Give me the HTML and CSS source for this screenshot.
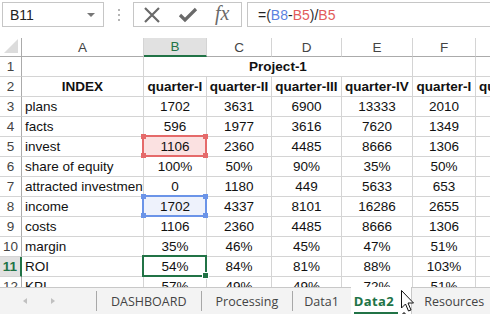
FILE: index.html
```html
<!DOCTYPE html>
<html lang="en">
<head>
    <meta charset="UTF-8">
    <title>Project-1</title>
    <link rel="stylesheet" href="styles.css">
</head>
<body>
    <div class="formula-bar">
        <div class="name-box">
            <span>B11</span>
            <span class="drop"></span>
        </div>
        <div class="dots"><i></i><i></i><i></i></div>
        <div class="buttons">
            <svg width="18" height="18" viewBox="0 0 18 18"><path d="M2 2 L16 16 M16 2 L2 16" stroke="#6a6a6a" stroke-width="2.2" fill="none"/></svg>
            <svg width="20" height="18" viewBox="0 0 20 18"><path d="M2 9 L7 14 L18 3" stroke="#6a6a6a" stroke-width="3.2" fill="none"/></svg>
            <span class="fx">fx</span>
        </div>
        <div class="formula">=<span class="paren">(</span><span class="ref-blue">B8</span>-<span class="ref-red">B5</span><span class="paren">)</span>/<span class="ref-red">B5</span></div>
    </div>

    <div class="sheet">
        <div class="grid">
            <div class="corner"><span class="tri"></span></div>
            <div class="colhead">A</div>
            <div class="colhead active">B</div>
            <div class="colhead">C</div>
            <div class="colhead">D</div>
            <div class="colhead">E</div>
            <div class="colhead">F</div>
            <div class="colhead">G</div>

            <div class="rowhead">1</div>
            <div class="c"></div>
            <div class="c bold merged">Project-1</div>
            <div class="c"></div>
            <div class="c"></div>

            <div class="rowhead">2</div>
            <div class="c bold mid">INDEX</div>
            <div class="c bold mid">quarter-I</div>
            <div class="c bold mid">quarter-II</div>
            <div class="c bold mid">quarter-III</div>
            <div class="c bold mid">quarter-IV</div>
            <div class="c bold mid">quarter-I</div>
            <div class="c bold">qu</div>

            <div class="rowhead">3</div>
            <div class="c">plans</div>
            <div class="c mid">1702</div><div class="c mid">3631</div><div class="c mid">6900</div><div class="c mid">13333</div><div class="c mid">2010</div><div class="c"></div>

            <div class="rowhead">4</div>
            <div class="c">facts</div>
            <div class="c mid">596</div><div class="c mid">1977</div><div class="c mid">3616</div><div class="c mid">7620</div><div class="c mid">1349</div><div class="c"></div>

            <div class="rowhead">5</div>
            <div class="c">invest</div>
            <div class="c mid sel sel-red">1106<i class="k tl"></i><i class="k tr"></i><i class="k bl"></i><i class="k br"></i></div>
            <div class="c mid">2360</div><div class="c mid">4485</div><div class="c mid">8666</div><div class="c mid">1306</div><div class="c"></div>

            <div class="rowhead">6</div>
            <div class="c">share of equity</div>
            <div class="c mid">100%</div><div class="c mid">50%</div><div class="c mid">90%</div><div class="c mid">35%</div><div class="c mid">50%</div><div class="c"></div>

            <div class="rowhead">7</div>
            <div class="c">attracted investments</div>
            <div class="c mid">0</div><div class="c mid">1180</div><div class="c mid">449</div><div class="c mid">5633</div><div class="c mid">653</div><div class="c"></div>

            <div class="rowhead">8</div>
            <div class="c">income</div>
            <div class="c mid sel sel-blue">1702<i class="k tl"></i><i class="k tr"></i><i class="k bl"></i><i class="k br"></i></div>
            <div class="c mid">4337</div><div class="c mid">8101</div><div class="c mid">16286</div><div class="c mid">2655</div><div class="c"></div>

            <div class="rowhead">9</div>
            <div class="c">costs</div>
            <div class="c mid">1106</div><div class="c mid">2360</div><div class="c mid">4485</div><div class="c mid">8666</div><div class="c mid">1306</div><div class="c"></div>

            <div class="rowhead">10</div>
            <div class="c">margin</div>
            <div class="c mid">35%</div><div class="c mid">46%</div><div class="c mid">45%</div><div class="c mid">47%</div><div class="c mid">51%</div><div class="c"></div>

            <div class="rowhead active">11</div>
            <div class="c">ROI</div>
            <div class="c mid sel sel-green">54%<i class="handle"></i></div>
            <div class="c mid">84%</div><div class="c mid">81%</div><div class="c mid">88%</div><div class="c mid">103%</div><div class="c"></div>

            <div class="rowhead">12</div>
            <div class="c">KPI</div>
            <div class="c mid">57%</div><div class="c mid">49%</div><div class="c mid">49%</div><div class="c mid">72%</div><div class="c mid">51%</div><div class="c"></div>
        </div>
    </div>

    <div class="tabs">
        <div class="arrows">
            <span class="arr left"></span>
            <span class="arr right"></span>
        </div>
        <div class="tab">DASHBOARD</div>
        <div class="tab">Processing</div>
        <div class="tab data1">Data1</div>
        <div class="tab current"><span>Data2</span></div>
        <div class="tab last">Resources</div>
        <svg class="cursor" width="20" height="28" viewBox="0 0 20 28">
            <path d="M1.5 1.5 L1.5 19 L5.5 15 L8.5 22 L11 21 L8 14 L13.5 14 Z" fill="#fff" stroke="#111" stroke-width="1"/>
            <path d="M4 23 L4 28 M2 25 L6 25" stroke="#111" stroke-width="1" fill="none"/>
        </svg>
    </div>
</body>
</html>
```

FILE: styles.css
```css
body {
    margin: 0;
    width: 490px;
    height: 314px;
    overflow: hidden;
    font-family: 'Liberation Sans', Arial, sans-serif;
    background: #fff;
    color: #222;
}

/* formula bar */
.formula-bar {
    display: flex;
    align-items: center;
    height: 25px;
    padding: 2px 0 11px 2px;
}

.name-box {
    box-sizing: border-box;
    width: 102px;
    height: 25px;
    border: 1px solid #c6c6c6;
    display: flex;
    align-items: center;
    justify-content: space-between;
    padding: 0 8px 0 7px;
    font-size: 14px;
    color: #222;
}

.drop {
    width: 0;
    height: 0;
    border-left: 4px solid transparent;
    border-right: 4px solid transparent;
    border-top: 4px solid #777;
}

.dots {
    width: 29px;
    display: flex;
    flex-direction: column;
    align-items: center;
    gap: 3px;
}

.dots i {
    width: 2px;
    height: 2px;
    background: #b5b5b5;
}

.buttons {
    box-sizing: border-box;
    width: 109px;
    height: 25px;
    border: 1px solid #c6c6c6;
    display: flex;
    align-items: center;
    gap: 17px;
    padding-left: 9px;
}

.fx {
    font-family: 'Liberation Serif', 'Times New Roman', serif;
    font-style: italic;
    font-size: 20px;
    color: #6a6a6a;
    margin-top: -2px;
}

.formula {
    box-sizing: border-box;
    flex: 1;
    height: 25px;
    margin-left: 5px;
    border: 1px solid #c6c6c6;
    border-right: none;
    padding-left: 10px;
    display: flex;
    align-items: center;
    font-size: 14px;
    color: #222;
}

.ref-blue { color: #5b82e0; }
.ref-red { color: #e25b5b; }
.paren { color: #333; }

/* sheet */
.sheet {
    height: 249px;
    overflow: hidden;
}

.grid {
    display: grid;
    grid-template-columns: 22px 122px 63px 65px 70px 71px 63px 60px;
    grid-template-rows: 19px;
    grid-auto-rows: 20px;
    font-size: 13.5px;
}

.corner {
    position: relative;
    border-right: 1px solid #ababab;
    border-bottom: 1px solid #ababab;
}

.tri {
    position: absolute;
    right: 3px;
    bottom: 3px;
    width: 0;
    height: 0;
    border-left: 14px solid transparent;
    border-bottom: 14px solid #dcdcdc;
}

.colhead {
    display: flex;
    align-items: center;
    justify-content: center;
    border-right: 1px solid #d4d4d4;
    border-bottom: 1px solid #ababab;
    color: #444;
}

.colhead.active {
    background: #e1e1e1;
    color: #217346;
    border-bottom: 2px solid #217346;
}

.rowhead {
    display: flex;
    align-items: center;
    justify-content: center;
    border-right: 1px solid #ababab;
    border-bottom: 1px solid #d4d4d4;
    color: #444;
}

.rowhead.active {
    background: #e1e1e1;
    color: #217346;
    font-weight: bold;
    border-right: 2px solid #217346;
}

.c {
    box-sizing: border-box;
    border-right: 1px solid #d4d4d4;
    border-bottom: 1px solid #d4d4d4;
    padding: 0 3px;
    display: flex;
    align-items: center;
    white-space: nowrap;
    overflow: hidden;
    color: #111;
}

.mid { justify-content: center; }
.bold { font-weight: bold; }

.merged {
    grid-column: span 4;
    justify-content: center;
}

/* selections */
.sel {
    position: relative;
    overflow: visible;
}

.sel::after {
    content: "";
    position: absolute;
    left: -2px;
    top: -2px;
    right: -1px;
    bottom: -1px;
    border: 2px solid;
}

.sel-red { background: #fbe1e1; }
.sel-red::after { border-color: #e56a6a; }
.sel-blue { background: #eef2fc; }
.sel-blue::after { border-color: #6b94e8; }
.sel-green::after { border-color: #217346; }

.k {
    position: absolute;
    width: 5px;
    height: 5px;
    z-index: 2;
}

.sel-red .k { background: #e56a6a; }
.sel-blue .k { background: #6b94e8; }
.k.tl { left: -3px; top: -3px; }
.k.tr { right: -2px; top: -3px; }
.k.bl { left: -3px; bottom: -2px; }
.k.br { right: -2px; bottom: -2px; }

.handle {
    position: absolute;
    right: -3px;
    bottom: -3px;
    width: 5px;
    height: 5px;
    background: #217346;
    border: 1px solid #fff;
    z-index: 2;
}

/* sheet tabs */
.tabs {
    position: relative;
    height: 27px;
    box-sizing: border-box;
    border-top: 1px solid #c8c8c8;
    background: #f3f3f3;
    display: flex;
    font-family: 'Open Sans', sans-serif;
    font-size: 12.5px;
    color: #444;
}

.arrows {
    flex-shrink: 0;
    width: 96px;
    display: flex;
    align-items: center;
    gap: 24px;
    padding-left: 23px;
    box-sizing: border-box;
}

.arr {
    width: 0;
    height: 0;
    border-top: 3px solid transparent;
    border-bottom: 3px solid transparent;
}

.arr.left { border-right: 4px solid #c0c0c0; }
.arr.right { border-left: 4px solid #c0c0c0; }

.tab {
    flex-shrink: 0;
    display: flex;
    align-items: center;
    padding: 0 14px;
    border-left: 1px solid #a8a8a8;
    margin: 3px 0 3px;
}

.tab.data1 {
    padding: 0 12px 0 11px;
}

.tab.current {
    margin: -1px 0 0;
    padding: 0 13px 0 3px;
    background: #fff;
    border-left: none;
    font-weight: bold;
    font-size: 13px;
    letter-spacing: 0.4px;
    color: #217346;
}

.tab.current span {
    height: 100%;
    display: flex;
    align-items: center;
    box-sizing: border-box;
    padding: 2px 4px 0 0;
    border-bottom: 2px solid #217346;
}

.tab.last {
    margin: -1px 0 0;
    border-left: 1px solid #c8c8c8;
    border-top: 1px solid #c8c8c8;
    padding-left: 12px;
}

.cursor {
    position: absolute;
    left: 400px;
    top: 1px;
}
```
